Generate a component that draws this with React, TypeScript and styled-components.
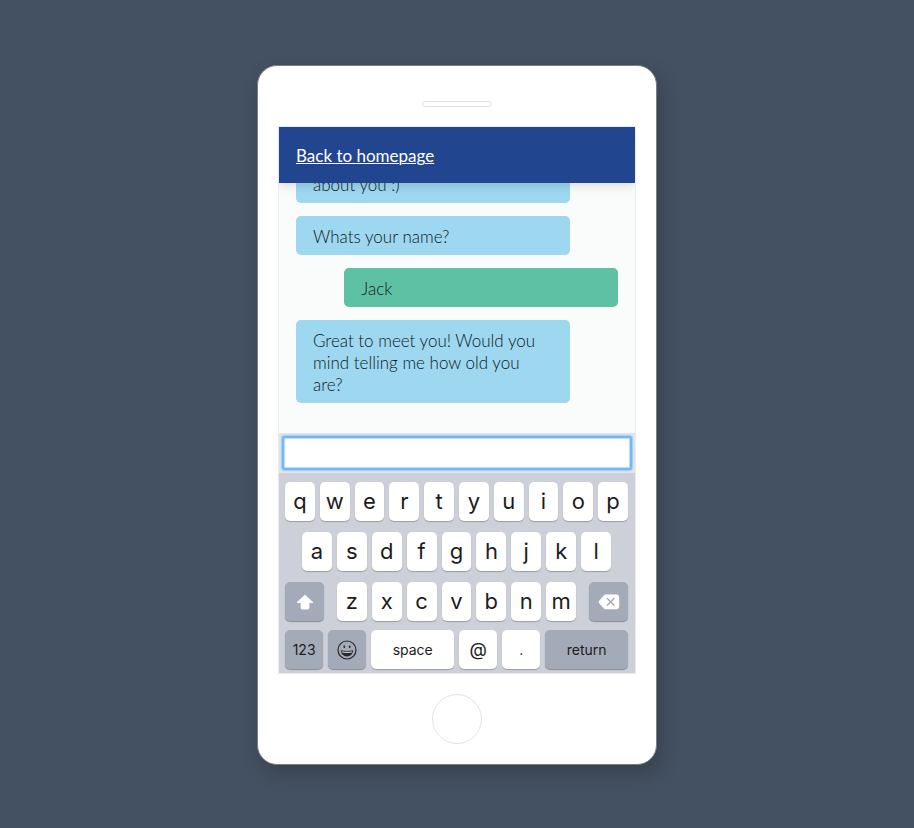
import React from "react";
import styled, { createGlobalStyle } from "styled-components";

const GlobalStyle = createGlobalStyle`
  *, *::before, *::after { box-sizing: border-box; }
  body {
    margin: 0;
    background: #445162;
    font-family: Lato, "Open Sans", sans-serif;
    color: #10181c;
  }
  button, input { font-family: inherit; color: inherit; }
`;

const Page = styled.main`
  display: flex;
  justify-content: center;
  align-items: flex-start;
  min-height: 100vh;
  padding: 65px 16px 48px;
`;

const Phone = styled.div`
  display: flex;
  flex-direction: column;
  align-items: center;
  width: 100%;
  max-width: 400px;
  padding: 35px 20px 20px;
  background: #fff;
  border: 1px solid #7d7f7f;
  border-radius: 20px;
  box-shadow: 4px 8px 20px rgba(0, 0, 0, 0.2);
`;

const Speaker = styled.div`
  width: 70px;
  height: 6px;
  border: 1px solid #dfe4e8;
  border-radius: 3px;
`;

const Screen = styled.div`
  display: flex;
  flex-direction: column;
  width: 100%;
  margin: 19px 0 20px;
  border: 1px solid #ebebed;
  background: #fafcfb;
`;

const Header = styled.header`
  position: relative;
  z-index: 1;
  display: flex;
  align-items: center;
  height: 56px;
  padding: 2px 17px 0;
  background: #22458f;
  box-shadow: 0 2px 10px rgba(0, 0, 0, 0.15);
  clip-path: inset(0 0 -16px 0);
`;

const HomeLink = styled.a`
  color: #fff;
  font-size: 17px;
  line-height: 22px;
  text-decoration: underline;
  text-decoration-thickness: 1px;
  text-underline-offset: 1px;
`;

const Messages = styled.div`
  display: flex;
  flex-direction: column;
  justify-content: flex-end;
  gap: 13px;
  height: 250px;
  padding: 0 17px 30px;
  overflow: hidden;
`;

const Bubble = styled.p<{ $mine?: boolean }>`
  flex: none;
  align-self: ${(p) => (p.$mine ? "flex-end" : "flex-start")};
  width: 85%;
  margin: 0;
  padding: 10px 17px 7px;
  border-radius: 5px;
  background: ${(p) => (p.$mine ? "#5ec1a4" : "#9dd7f0")};
  font-size: 17px;
  font-weight: 300;
  line-height: 22px;
`;

const Composer = styled.form`
  display: flex;
  padding: 3px;
  background: #dfe5e8;
`;

const MessageInput = styled.input`
  flex: 1;
  min-width: 0;
  height: 34px;
  padding: 0 10px;
  border: 2px solid #76b5f8;
  border-radius: 3px;
  outline: none;
  background: #fff;
  box-shadow: 0 0 1px 1px #9ccaf8, inset 0 0 1px 1px #b9dafa;
  font-size: 17px;
`;

const Keyboard = styled.div`
  padding: 9px 7px 4px 6px;
  background: #cdd0d8;
  font-family: Inter, Roboto, sans-serif;
  color: #1c1c1e;
`;

const KeyRow = styled.div<{ $inset?: number; $below?: number; $columns?: string }>`
  display: grid;
  grid-template-columns: ${(p) => p.$columns ?? "none"};
  grid-auto-columns: minmax(0, 1fr);
  grid-auto-flow: column;
  gap: 5px;
  padding: 0 ${(p) => p.$inset ?? 0}px;
  margin-bottom: ${(p) => p.$below ?? 0}px;
`;

const ShiftRow = styled.div`
  display: flex;
  justify-content: space-between;
  gap: 13px;
  margin-bottom: 9px;
`;

const LetterGroup = styled.div`
  flex: 1;
  display: grid;
  grid-auto-flow: column;
  grid-auto-columns: minmax(0, 1fr);
  gap: 5px;
`;

const Key = styled.button<{ $dark?: boolean; $small?: boolean; $fixed?: boolean }>`
  display: flex;
  align-items: center;
  justify-content: center;
  ${(p) => (p.$fixed ? "flex: 0 0 39px;" : "")}
  min-width: 0;
  height: 39px;
  padding: 0 0 ${(p) => (p.$small ? 0 : 2)}px;
  border: 0;
  border-radius: 5px;
  background: ${(p) => (p.$dark ? "#a4abb8" : "#fff")};
  box-shadow: 0 1px 1px ${(p) => (p.$dark ? "#858b96" : "#9a9da4")};
  font-size: ${(p) => (p.$small ? 14 : 22)}px;
  line-height: 28px;
`;

const Symbol = styled.span`
  font-size: 18px;
`;

const HomeButton = styled.button`
  width: 50px;
  height: 50px;
  padding: 0;
  border: 1px solid #dfe5e9;
  border-radius: 50%;
  background: #fff;
`;

const ShiftIcon = () => (
  <svg width="18" height="16" viewBox="0 0 18 16" aria-hidden="true">
    <path
      d="M9 1 L17 8.6 H13 V14 Q13 15 12 15 H6 Q5 15 5 14 V8.6 H1 Z"
      fill="#fff"
      stroke="#fff"
      strokeWidth="0.8"
      strokeLinejoin="round"
    />
  </svg>
);

const DeleteIcon = () => (
  <svg width="22" height="16" viewBox="0 0 22 16" aria-hidden="true">
    <path
      d="M7.5 .6 H18 Q21.2 .6 21.2 3.6 V12.2 Q21.2 15.2 18 15.2 H7.5 Q6.4 15.2 5.6 14.3 L1 9 Q.2 8 1 7 L5.6 1.5 Q6.4 .6 7.5 .6 Z"
      fill="#fff"
    />
    <path d="M9.4 4.6 L16 11.2 M16 4.6 L9.4 11.2" stroke="#a4abb8" strokeWidth="1.4" strokeLinecap="round" />
  </svg>
);

const EmojiIcon = () => (
  <svg width="20" height="20" viewBox="0 0 20 20" aria-hidden="true">
    <circle cx="10" cy="10" r="9" fill="none" stroke="#26282d" strokeWidth="1.2" />
    <ellipse cx="7.3" cy="6.8" rx="0.9" ry="1.2" fill="#26282d" />
    <ellipse cx="12.7" cy="6.8" rx="0.9" ry="1.2" fill="#26282d" />
    <path d="M3.8 10.2 Q10 11.6 16.2 10.2 Q15.6 16.2 10 16.4 Q4.4 16.2 3.8 10.2 Z" fill="#26282d" />
    <path d="M4.8 11.3 Q10 12.4 15.2 11.3 L14.8 12.4 Q10 13.4 5.2 12.4 Z" fill="#c3c8d1" />
  </svg>
);

const letters = (text: string) =>
  text.split("").map((letter) => (
    <Key key={letter} type="button">
      {letter}
    </Key>
  ));

export default function App() {
  return (
    <>
      <GlobalStyle />
      <Page>
        <Phone>
          <Speaker />
          <Screen>
            <Header>
              <HomeLink href="#">Back to homepage</HomeLink>
            </Header>
            <Messages>
              <Bubble>about you :)</Bubble>
              <Bubble>Whats your name?</Bubble>
              <Bubble $mine>Jack</Bubble>
              <Bubble>Great to meet you! Would you mind telling me how old you are?</Bubble>
            </Messages>
            <Composer onSubmit={(e) => e.preventDefault()}>
              <MessageInput type="text" aria-label="Your message" />
            </Composer>
            <Keyboard>
              <KeyRow $below={11}>{letters("qwertyuiop")}</KeyRow>
              <KeyRow $inset={17} $below={11}>
                {letters("asdfghjkl")}
              </KeyRow>
              <ShiftRow>
                <Key type="button" $dark $fixed $small aria-label="Shift">
                  <ShiftIcon />
                </Key>
                <LetterGroup>{letters("zxcvbnm")}</LetterGroup>
                <Key type="button" $dark $fixed $small aria-label="Delete">
                  <DeleteIcon />
                </Key>
              </ShiftRow>
              <KeyRow $columns="38fr 38fr 82fr 38fr 38fr 82fr">
                <Key type="button" $dark $small>
                  123
                </Key>
                <Key type="button" $dark $small aria-label="Emoji">
                  <EmojiIcon />
                </Key>
                <Key type="button" $small>
                  space
                </Key>
                <Key type="button" $small>
                  <Symbol>@</Symbol>
                </Key>
                <Key type="button" $small>
                  .
                </Key>
                <Key type="button" $dark $small>
                  return
                </Key>
              </KeyRow>
            </Keyboard>
          </Screen>
          <HomeButton type="button" aria-label="Home" />
        </Phone>
      </Page>
    </>
  );
}
